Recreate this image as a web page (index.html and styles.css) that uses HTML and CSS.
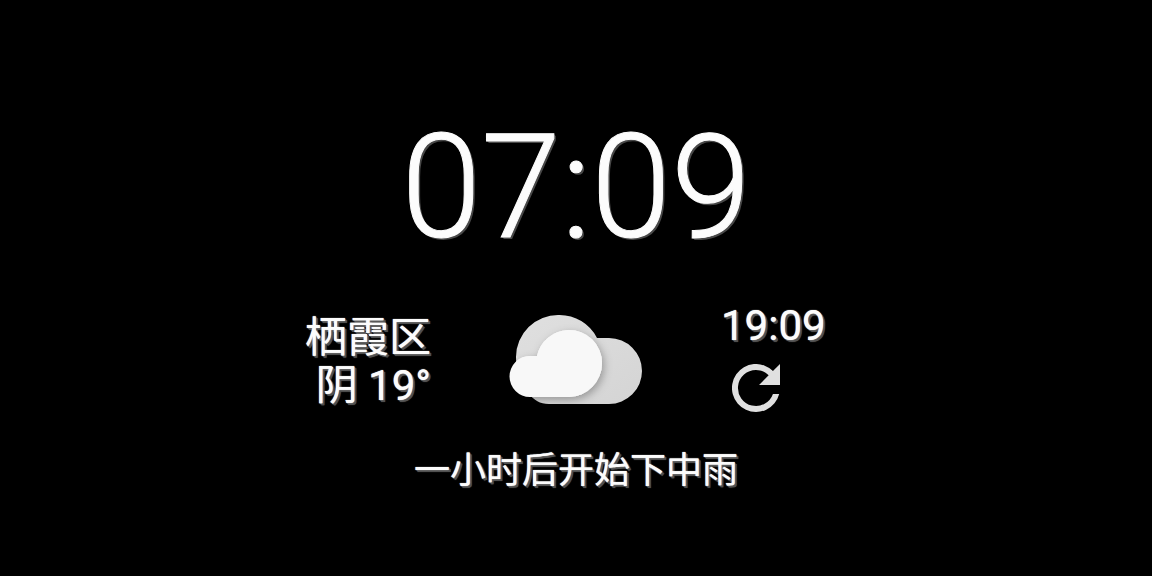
FILE: index.html
```html
<!DOCTYPE html>
<html lang="zh-CN">
<head>
<meta charset="utf-8">
<title>时钟天气</title>
<link rel="stylesheet" href="styles.css">
</head>
<body>
<main class="widget">
  <time class="clock">07:09</time>
  <section class="weather">
    <div class="place">
      <div>栖霞区</div>
      <div>阴 19°</div>
    </div>
    <svg class="cloud" viewBox="0 0 134 92" role="img" aria-label="阴">
      <defs>
        <filter id="soft" x="-20%" y="-20%" width="150%" height="150%">
          <feDropShadow dx="2" dy="3" stdDeviation="4" flood-color="#000" flood-opacity="0.3"/>
        </filter>
        <linearGradient id="shade" x1="0" y1="0" x2="1" y2="1">
          <stop offset="0" stop-color="#e0e0e0"/>
          <stop offset="1" stop-color="#d4d4d4"/>
        </linearGradient>
        <clipPath id="back">
          <path d="M50 1A42 42 0 0 1 88 24H100A33 33 0 0 1 100 90H40C31 90 25 86 20 80C11 70 7 58 7 43A42 42 0 0 1 50 1Z"/>
        </clipPath>
      </defs>
      <g clip-path="url(#back)">
        <rect width="134" height="92" fill="url(#shade)"/>
        <path filter="url(#soft)" fill="#f8f8f8" d="M21 83A20 20 0 0 1 21 42H28A33 33 0 0 1 59 16A33 33 0 0 1 93 49A34 34 0 0 1 60 83Z"/>
      </g>
      <path fill="#f8f8f8" d="M21 83A20 20 0 0 1 21 42H28A33 33 0 0 1 59 16A33 33 0 0 1 93 49A34 34 0 0 1 60 83Z"/>
    </svg>
    <div class="update">
      <time>19:09</time>
      <button class="refresh" type="button" aria-label="刷新">
        <svg viewBox="4 4 16 16"><path d="M17.65 6.35A8 8 0 1 0 19.73 14h-2.08A6 6 0 1 1 12 6c1.66 0 3.14.69 4.22 1.78L13 11h7V4z"/></svg>
      </button>
    </div>
  </section>
  <p class="forecast">一小时后开始下中雨</p>
</main>
</body>
</html>
```

FILE: styles.css
```css
body {
  margin: 0;
  background: #000;
  color: #fcfcfc;
  font-family: Roboto, "Noto Sans CJK SC", sans-serif;
  text-shadow: 0 0 1px #fcfcfc, 1px 1px 0 #505050, 2px 2px 0 #505050, 2px 2px 1px #505050;
}

.widget {
  display: flex;
  flex-direction: column;
  align-items: center;
  padding-top: 100px;
}

.clock {
  font-size: 144px;
  font-weight: 300;
  line-height: 176px;
  -webkit-text-stroke: 1px #fcfcfc;
  text-shadow: 1px 1px 0 #484848, 2px 2px 0 #484848;
}

.weather {
  display: grid;
  grid-template-columns: 1fr 134px 1fr;
  column-gap: 78px;
  width: 100%;
  margin-top: 26px;
}

.place {
  font-size: 42px;
  line-height: 48px;
  padding-top: 12px;
  text-align: right;
}

.cloud {
  width: 134px;
  height: 92px;
  margin-top: 12px;
}

.update {
  display: flex;
  flex-direction: column;
  align-items: flex-start;
  font-size: 42px;
  line-height: 48px;
}

.refresh {
  width: 48px;
  height: 48px;
  margin: 14px 0 0 11px;
  padding: 0;
  border: 0;
  background: none;
}

.refresh svg {
  display: block;
  fill: #e0e0e0;
}

.forecast {
  margin: 35px 0 0;
  font-size: 36px;
  line-height: 48px;
}
```
